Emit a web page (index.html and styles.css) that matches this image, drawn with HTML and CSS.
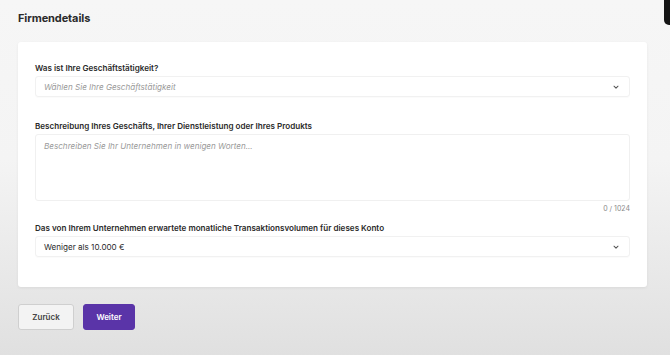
FILE: index.html
```html
<!DOCTYPE html>
<html lang="de">
<head>
    <meta charset="UTF-8">
    <meta name="viewport" content="width=device-width, initial-scale=1.0">
    <title>Firmendetails</title>
    <link rel="stylesheet" href="styles.css">
</head>
<body>
    <div class="corner"></div>

    <div class="page">
        <h1>Firmendetails</h1>

        <div class="card">
            <div class="field">
                <label>Was ist Ihre Geschäftstätigkeit?</label>
                <div class="select">
                    <span class="placeholder">Wählen Sie Ihre Geschäftstätigkeit</span>
                    <svg class="chevron" viewBox="0 0 10 10" width="8" height="8"><path d="M2.5 4 L5 6.5 L7.5 4" fill="none" stroke="#555" stroke-width="1.3" stroke-linecap="round" stroke-linejoin="round"/></svg>
                </div>
            </div>

            <div class="field field-text">
                <label>Beschreibung Ihres Geschäfts, Ihrer Dienstleistung oder Ihres Produkts</label>
                <div class="textarea">
                    <span class="placeholder">Beschreiben Sie Ihr Unternehmen in wenigen Worten...</span>
                </div>
                <div class="counter">0 / 1024</div>
            </div>

            <div class="field">
                <label>Das von Ihrem Unternehmen erwartete monatliche Transaktionsvolumen für dieses Konto</label>
                <div class="select">
                    <span class="value">Weniger als 10.000 €</span>
                    <svg class="chevron" viewBox="0 0 10 10" width="8" height="8"><path d="M2.5 4 L5 6.5 L7.5 4" fill="none" stroke="#555" stroke-width="1.3" stroke-linecap="round" stroke-linejoin="round"/></svg>
                </div>
            </div>
        </div>

        <div class="actions">
            <button class="btn btn-back">Zurück</button>
            <button class="btn btn-next">Weiter</button>
        </div>
    </div>
</body>
</html>
```

FILE: styles.css
```css
html, body {
    height: 100%;
}

body {
    margin: 0;
    font-family: 'Inter', 'Liberation Sans', sans-serif;
    color: #222;
    background: linear-gradient(to bottom, #f6f6f6 0%, #f4f4f4 45%, #e0e0e0 100%);
    overflow: hidden;
}

.corner {
    position: fixed;
    top: -6px;
    right: -10px;
    width: 16px;
    height: 31px;
    background-color: #151515;
    border-radius: 5px;
}

.page {
    padding: 11px 23px 0 18px;
}

h1 {
    margin: 0;
    font-size: 11px;
    font-weight: 700;
    color: #2a2a2a;
    letter-spacing: -0.1px;
}

.card {
    margin-top: 17px;
    background-color: #fff;
    border-radius: 3px;
    box-shadow: 0 1px 3px rgba(0, 0, 0, 0.06);
    padding: 21px 17px 30px 17px;
}

.field {
    display: flex;
    flex-direction: column;
}

.field + .field {
    margin-top: 24px;
}

.field-text + .field {
    margin-top: 10px;
}

label {
    font-size: 8.1px;
    font-weight: 600;
    color: #2a2a2a;
    margin-bottom: 3px;
}

.select {
    height: 21px;
    border: 1px solid #f1f1f1;
    border-radius: 3px;
    display: flex;
    align-items: center;
    justify-content: space-between;
    padding: 0 9px 0 8px;
    box-sizing: border-box;
    box-shadow: 0 1px 1px rgba(0, 0, 0, 0.02);
}

.placeholder {
    font-size: 8.1px;
    font-style: italic;
    color: #9a9a9a;
}

.value {
    font-size: 8.1px;
    color: #2a2a2a;
}

.textarea {
    height: 67px;
    border: 1px solid #f0f0f0;
    border-radius: 3px;
    padding: 5px 8px;
    box-sizing: border-box;
    font-size: 8.1px;
    line-height: 12px;
}

.counter {
    text-align: right;
    font-size: 7px;
    color: #8a8a8a;
    margin-top: 3px;
}

.actions {
    display: flex;
    gap: 9px;
    margin-top: 17px;
}

.btn {
    height: 26px;
    border-radius: 3px;
    font-family: 'Inter', 'Liberation Sans', sans-serif;
    font-size: 8px;
    font-weight: 600;
    cursor: pointer;
}

.btn-back {
    width: 56px;
    background-color: #f3f3f3;
    border: 1px solid #cfcfcf;
    color: #444;
}

.btn-next {
    width: 52px;
    background-color: #5a34a8;
    border: 1px solid #5a34a8;
    color: #fff;
}
```
